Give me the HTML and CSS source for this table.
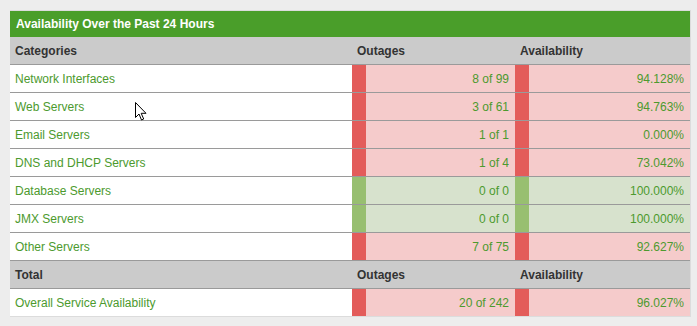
FILE: index.html
```html
<!DOCTYPE html>
<html>
<head>
<meta charset="utf-8">
<link rel="stylesheet" href="styles.css">
</head>
<body>
<div class="panel">
  <div class="panel-title">Availability Over the Past 24 Hours</div>
  <table class="avail">
    <colgroup><col class="c1"><col class="c2"><col class="c3"></colgroup>
    <tr class="head"><th>Categories</th><th>Outages</th><th>Availability</th></tr>
    <tr><td class="name">Network Interfaces</td><td class="bad">8 of 99</td><td class="bad">94.128%</td></tr>
    <tr><td class="name">Web Servers</td><td class="bad">3 of 61</td><td class="bad">94.763%</td></tr>
    <tr><td class="name">Email Servers</td><td class="bad">1 of 1</td><td class="bad">0.000%</td></tr>
    <tr><td class="name">DNS and DHCP Servers</td><td class="bad">1 of 4</td><td class="bad">73.042%</td></tr>
    <tr><td class="name">Database Servers</td><td class="good">0 of 0</td><td class="good">100.000%</td></tr>
    <tr><td class="name">JMX Servers</td><td class="good">0 of 0</td><td class="good">100.000%</td></tr>
    <tr><td class="name">Other Servers</td><td class="bad">7 of 75</td><td class="bad">92.627%</td></tr>
    <tr class="head"><th>Total</th><th>Outages</th><th>Availability</th></tr>
    <tr class="last"><td class="name">Overall Service Availability</td><td class="bad">20 of 242</td><td class="bad">96.027%</td></tr>
  </table>
</div>
<svg class="cursor" width="12" height="20" viewBox="0 0 12 20">
  <path d="M0.5 0.5 L0.5 15.5 L4 12 L6.5 18 L8.7 17 L6.2 11.3 L11 11.3 Z" fill="#fff" stroke="#000" stroke-width="1" stroke-linejoin="miter"/>
</svg>
</body>
</html>
```
FILE: styles.css
```css
html, body {
  margin: 0;
  padding: 0;
  background: #ededed;
  font-family: "Liberation Sans", Arial, sans-serif;
  font-size: 12px;
}
body {
  padding: 10px 0 0 10px;
  position: relative;
  height: 326px;
  box-sizing: border-box;
}
.panel {
  width: 680px;
  background: #fff;
  border-top: 1px solid #dcdcdc;
  border-right: 1px solid #dcdcdc;
  border-bottom: 1px solid #dcdcdc;
}
.panel-title {
  background: #4a9e2a;
  color: #fff;
  font-weight: bold;
  height: 26px;
  line-height: 26px;
  padding-left: 6px;
}
.avail {
  width: 680px;
  border-collapse: separate;
  border-spacing: 0;
  table-layout: fixed;
}
.c1 { width: 342px; }
.c2 { width: 163px; }
.c3 { width: 175px; }
.avail th, .avail td {
  height: 27px;
  padding: 0 5px;
  border-bottom: 1px solid #9a9a9a;
  vertical-align: middle;
}
.avail tr.last td { border-bottom: 0; }
.avail th {
  background: #cbcbcb;
  color: #333;
  text-align: left;
  font-weight: bold;
}
.avail td.name {
  color: #4c9a2e;
}
.avail td.bad, .avail td.good {
  text-align: right;
  color: #4c9a2e;
  padding-right: 6px;
}
.avail td.bad {
  background: #f5cbcb;
  box-shadow: inset 14px 0 0 #e35c5a;
}
.avail td.good {
  background: #d7e2cd;
  box-shadow: inset 14px 0 0 #98bf70;
}
.cursor {
  position: absolute;
  left: 135px;
  top: 102px;
}
```
